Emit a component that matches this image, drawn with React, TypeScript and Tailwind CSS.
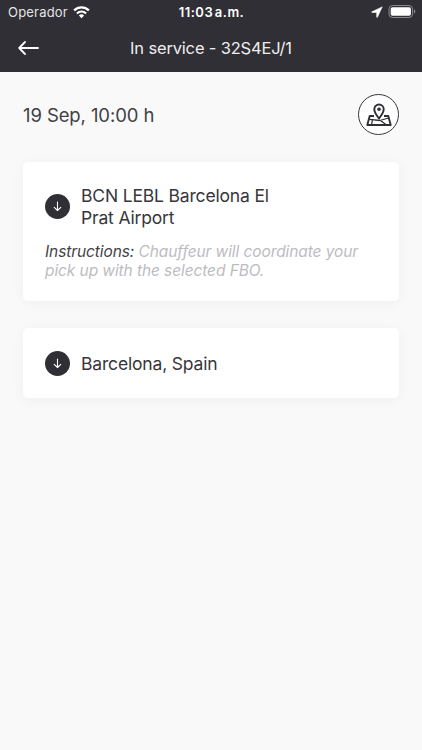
import React from 'react';

interface Stop {
    id: number;
    place: string;
    instructions?: string;
}

const stops: Stop[] = [
    {
        id: 1,
        place: 'BCN LEBL Barcelona El Prat Airport',
        instructions: 'Chauffeur will coordinate your pick up with the selected FBO.',
    },
    { id: 2, place: 'Barcelona, Spain' },
];

function StatusBar() {
    return (
        <div className="grid h-6 grid-cols-3 items-center pl-2 pr-[6px] text-white">
            <div className="flex items-center gap-[5px]">
                <span className="whitespace-nowrap text-[13px] leading-6 tracking-[0.2px] text-[#e4e4e6]">Operador</span>
                <svg width="17" height="13" viewBox="0 0 17 13" fill="none" stroke="currentColor">
                    <path d="M1.1 4.4a10.6 10.6 0 0 1 14.8 0" strokeWidth="2.3" />
                    <path d="M3.9 7.4a6.6 6.6 0 0 1 9.2 0" strokeWidth="2.1" />
                    <path d="M8.5 12.2 5.9 9.6a3.7 3.7 0 0 1 5.2 0Z" fill="currentColor" stroke="none" />
                </svg>
            </div>
            <span className="-ml-px whitespace-nowrap text-center text-[13px] font-semibold leading-6 tracking-[0.5px]">11:03&#8202;a.m.</span>
            <div className="flex items-center justify-end gap-[5px]">
                <svg width="12" height="12" viewBox="0 0 12 12" fill="currentColor" stroke="currentColor" strokeWidth="0.6">
                    <path d="M11.2.9.9 5.8c-.4.2-.3.7.1.7h4.7v4.6c0 .4.5.5.7.1Z" />
                </svg>
                <svg width="28" height="14" viewBox="0 0 28 14" fill="none">
                    <rect x="1" y="0.5" width="23.6" height="12" rx="3.6" stroke="#8b8b8f" />
                    <rect x="2.7" y="2.2" width="20.2" height="8.6" rx="1.8" fill="white" />
                    <path d="M26 4.5v4c.8-.3 1.3-1.1 1.3-2s-.5-1.7-1.3-2Z" fill="#8b8b8f" />
                </svg>
            </div>
        </div>
    );
}

function Header() {
    return (
        <header className="h-[72px] bg-[#302f35]">
            <StatusBar />
            <div className="grid h-12 grid-cols-[60px_1fr_60px] items-center text-white">
                <button className="pl-[18px]" aria-label="Back">
                    <svg width="21" height="14" viewBox="0 0 21 14" fill="none" stroke="currentColor" strokeWidth="1.8" strokeLinecap="round" strokeLinejoin="round">
                        <path d="M20 7H1.2M7 1 1.2 7 7 13" />
                    </svg>
                </button>
                <h1 className="whitespace-nowrap text-center text-[16.5px] leading-6 tracking-[-0.17px] text-[#ededee]">In service - 32S4EJ/1</h1>
            </div>
        </header>
    );
}

function MapButton() {
    return (
        <button className="flex size-[41px] items-center justify-center rounded-full border-[1.5px] border-[#37363b] bg-white" aria-label="Map">
            <svg width="26" height="24" viewBox="0 0 26 24" fill="none" stroke="#302f35" strokeWidth="1.9" strokeLinejoin="round">
                <path d="M8 13H3.7L1.3 22H24.7L22.3 13H18" />
                <path d="M3.2 16.3 14 17.5 22.5 15M14.500 17.500 20.500 22M6.500 16.700 5.500 22" strokeWidth="1.3" />
                <path d="M13 15.5C11.500 13 8.300 10 8.300 6.200a4.700 4.700 0 0 1 9.400 0c0 3.800-3.200 6.800-4.700 9.300Z" fill="white" />
                <circle cx="13" cy="6.2" r="1.5" fill="#302f35" strokeWidth="0.6" />
            </svg>
        </button>
    );
}

function StopCard({ stop }: { stop: Stop }) {
    return (
        <div className="flex min-h-[70px] flex-col justify-center rounded-[5px] bg-white px-[22px] pb-[21px] pt-[22px] shadow-[0_2px_14px_rgba(0,0,0,0.045)]">
            <div className="flex items-center gap-[11px]">
                <span className="mb-px flex size-[25px] shrink-0 items-center justify-center rounded-full bg-[#302f35]">
                    <svg width="9" height="11" viewBox="0 0 9 11" fill="none" stroke="white" strokeWidth="1.1" strokeLinecap="round" strokeLinejoin="round">
                        <path d="M4.5 1V9.5M1.2 6.3 4.5 9.5 7.8 6.3" />
                    </svg>
                </span>
                <p className="w-[210px] py-px text-[17.5px] leading-[22px] tracking-[-0.17px] text-[#37363b]">{stop.place}</p>
            </div>
            {stop.instructions && (
                <p className="mt-3 w-[322px] text-[15.5px] italic leading-[19px] tracking-[-0.09px] text-[#bcbcbf]">
                    <span className="text-[#444348]">Instructions:</span> {stop.instructions}
                </p>
            )}
        </div>
    );
}

export default function App() {
    return (
        <div className="min-h-[750px] bg-[#f9f9f9] font-['Inter',sans-serif]">
            <Header />
            <main className="px-[23px] pt-[22px]">
                <div className="flex items-center justify-between">
                    <h2 className="pt-px text-[18.5px] leading-6 tracking-[-0.1px] text-[#414045]">19 Sep, 10:00 h</h2>
                    <MapButton />
                </div>
                <div className="mt-[27px] flex flex-col gap-[27px]">
                    {stops.map(stop => (
                        <StopCard key={stop.id} stop={stop} />
                    ))}
                </div>
            </main>
        </div>
    );
}
